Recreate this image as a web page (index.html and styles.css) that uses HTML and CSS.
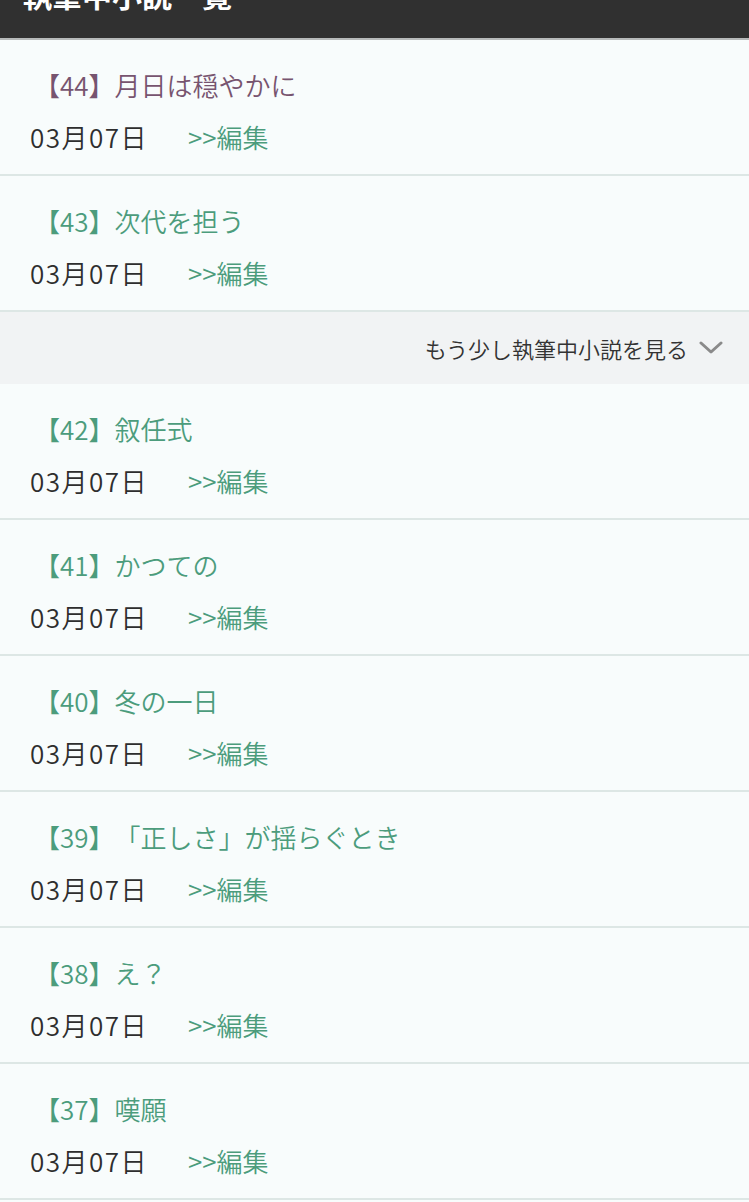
FILE: index.html
```html
<!DOCTYPE html>
<html lang="ja">
<head>
<meta charset="utf-8">
<link rel="stylesheet" href="styles.css">
</head>
<body>
<header class="header"><h1 class="header-title">執筆中小説一覧</h1></header>
<ul class="list">
  <li class="item"><a class="title visited">【44】月日は穏やかに</a><div class="meta"><span class="date">03月07日</span><a class="edit">&gt;&gt;編集</a></div></li>
  <li class="item"><a class="title">【43】次代を担う</a><div class="meta"><span class="date">03月07日</span><a class="edit">&gt;&gt;編集</a></div></li>
  <li class="more"><span class="more-text">もう少し執筆中小説を見る</span><svg class="chevron" width="24" height="14" viewBox="0 0 24 14"><path d="M2 2 L12 11 L22 2" fill="none" stroke="#8a8a8a" stroke-width="3" stroke-linecap="round" stroke-linejoin="round"/></svg></li>
  <li class="item"><a class="title">【42】叙任式</a><div class="meta"><span class="date">03月07日</span><a class="edit">&gt;&gt;編集</a></div></li>
  <li class="item"><a class="title">【41】かつての</a><div class="meta"><span class="date">03月07日</span><a class="edit">&gt;&gt;編集</a></div></li>
  <li class="item"><a class="title">【40】冬の一日</a><div class="meta"><span class="date">03月07日</span><a class="edit">&gt;&gt;編集</a></div></li>
  <li class="item"><a class="title">【39】「正しさ」が揺らぐとき</a><div class="meta"><span class="date">03月07日</span><a class="edit">&gt;&gt;編集</a></div></li>
  <li class="item"><a class="title">【38】え？</a><div class="meta"><span class="date">03月07日</span><a class="edit">&gt;&gt;編集</a></div></li>
  <li class="item"><a class="title">【37】嘆願</a><div class="meta"><span class="date">03月07日</span><a class="edit">&gt;&gt;編集</a></div></li>
</ul>
</body>
</html>
```

FILE: styles.css
```css
html, body {
  margin: 0;
  padding: 0;
  background: #f8fcfc;
  font-family: "Noto Sans CJK JP", "Noto Sans", sans-serif;
  text-spacing-trim: space-all;
}
.header {
  height: 38px;
  background: #303030;
  border-bottom: 2px solid #b6b9b9;
  overflow: hidden;
  padding-left: 22px;
}
.header-title {
  margin: -21px 0 0 0;
  font-size: 30px;
  line-height: 30px;
  font-weight: bold;
  color: #ffffff;
}
.list {
  list-style: none;
  margin: 0;
  padding: 0;
}
.item {
  box-sizing: border-box;
  height: 136px;
  padding: 28px 0 0 30px;
  border-bottom: 2px solid #dde7e5;
  display: flex;
  flex-direction: column;
  gap: 18px;
}
.title {
  font-size: 26px;
  line-height: 34px;
  font-weight: 350;
  color: #4c9c7c;
  padding-left: 4px;
}
.title.visited {
  color: #77546f;
}
.meta {
  display: flex;
  font-size: 26px;
  line-height: 34px;
  font-weight: 350;
}
.date {
  color: #2e2e2e;
  width: 158px;
  letter-spacing: 1.5px;
}
.edit {
  color: #4c9c7c;
}
.more {
  height: 72px;
  background: #f1f3f4;
  display: flex;
  align-items: center;
  justify-content: flex-end;
  padding-right: 26px;
  gap: 11px;
}
.more-text {
  font-size: 22px;
  font-weight: 350;
  color: #333333;
}
.chevron {
  display: block;
}
```
